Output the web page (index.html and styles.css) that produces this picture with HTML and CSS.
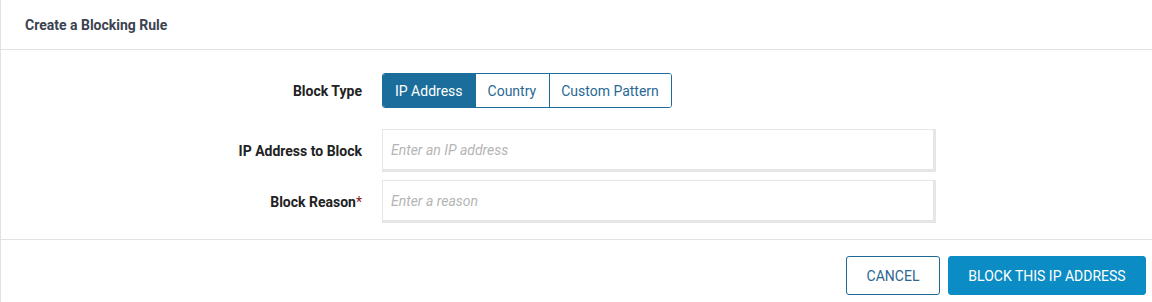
FILE: index.html
```html
<!DOCTYPE html>
<html lang="en">
<head>
<meta charset="utf-8">
<title>Create a Blocking Rule</title>
<link rel="stylesheet" href="styles.css">
</head>
<body>
<div class="panel">
  <div class="panel-header">Create a Blocking Rule</div>
  <div class="panel-body">
    <div class="row row-type">
      <div class="label">Block Type</div>
      <div class="segmented">
        <button class="seg active">IP Address</button>
        <button class="seg seg-mid">Country</button>
        <button class="seg seg-wide">Custom Pattern</button>
      </div>
    </div>
    <div class="row">
      <label class="label" for="ip">IP Address to Block</label>
      <input id="ip" class="field" type="text" placeholder="Enter an IP address">
    </div>
    <div class="row">
      <label class="label" for="reason">Block Reason<span class="req">*</span></label>
      <input id="reason" class="field" type="text" placeholder="Enter a reason">
    </div>
  </div>
  <div class="panel-footer">
    <button class="btn btn-outline">CANCEL</button>
    <button class="btn btn-primary">BLOCK THIS IP ADDRESS</button>
  </div>
</div>
</body>
</html>
```
FILE: styles.css
```css
* { box-sizing: border-box; }
html, body { margin: 0; padding: 0; background: #fff; }
body { font-family: Roboto, "Noto Sans", Arial, sans-serif; }

.panel {
  width: 1152px;
  height: 302px;
  border-left: 1px solid #e2e2e2;
  background: #fff;
}

.panel-header {
  height: 50px;
  padding: 17px 24px 0;
  font-size: 14px;
  font-weight: 700;
  color: #3b4350;
  border-bottom: 1px solid #e2e2e2;
}

.panel-body {
  padding: 23px 0 16px;
  border-bottom: 1px solid #e2e2e2;
}

.row {
  display: grid;
  grid-template-columns: 361px auto;
  column-gap: 20px;
  align-items: center;
  margin-bottom: 8px;
}
.row-type { margin-bottom: 21px; }
.row:last-child { margin-bottom: 0; }

.label {
  text-align: right;
  font-size: 14px;
  font-weight: 700;
  color: #222;
}
.req { color: #8a1c1c; font-weight: 400; }

.segmented {
  display: flex;
  width: max-content;
  border: 1px solid #1b6e9b;
  border-radius: 3px;
  overflow: hidden;
}
.seg {
  height: 33px;
  padding: 0 12px;
  border: 0;
  border-left: 1px solid #1b6e9b;
  background: #fff;
  color: #2a6994;
  font-family: inherit;
  font-size: 14px;
}
.seg:first-child { border-left: 0; }
.seg.active { background: #1b6e9b; color: #fff; }
.seg-mid { padding: 0 13px 0 12px; }
.seg-wide { padding: 0 12px 0 11px; }

.field {
  width: 554px;
  height: 43px;
  padding: 0 8px;
  border: 1px solid #e6e6e6;
  border-right-width: 3px;
  border-bottom-width: 3px;
  font-family: inherit;
  font-size: 14px;
  color: #333;
  outline: none;
}
.field::placeholder { color: #b5b5b5; font-style: italic; }

.panel-footer {
  display: flex;
  justify-content: flex-end;
  gap: 8px;
  padding: 16px 6px 0 0;
}

.btn {
  height: 39px;
  border-radius: 3px;
  font-family: inherit;
  font-size: 14px;
  padding: 0 10px;
}
.btn-outline {
  width: 94px;
  background: #fff;
  border: 1px solid #1d6a96;
  color: #2c6691;
}
.btn-primary {
  width: 198px;
  background: #0b8cc4;
  border: 1px solid #0b8cc4;
  color: #fff;
}
```
